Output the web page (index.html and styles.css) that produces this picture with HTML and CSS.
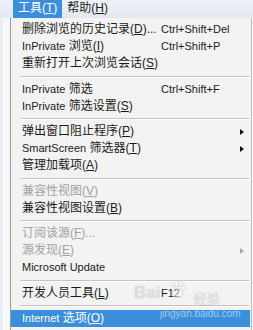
FILE: index.html
```html
<!DOCTYPE html>
<html lang="zh-CN">
<head>
<meta charset="utf-8">
<link rel="stylesheet" href="styles.css">
</head>
<body>
<div class="screen">
  <div class="menubar">
    <span class="mb-item active">工具(<u>T</u>)</span>
    <span class="mb-item">帮助(<u>H</u>)</span>
  </div>
  <div class="main">
    <div class="side"></div>
    <div class="menu">
      <div class="item"><span class="label">删除浏览的历史记录(<u>D</u>)...</span><span class="key">Ctrl+Shift+Del</span></div>
      <div class="item"><span class="label"><span class="en">InPrivate</span> 浏览(<u>I</u>)</span><span class="key">Ctrl+Shift+P</span></div>
      <div class="item"><span class="label">重新打开上次浏览会话(<u>S</u>)</span></div>
      <div class="sep tall"></div>
      <div class="item"><span class="label"><span class="en">InPrivate</span> 筛选</span><span class="key">Ctrl+Shift+F</span></div>
      <div class="item"><span class="label"><span class="en">InPrivate</span> 筛选设置(<u>S</u>)</span></div>
      <div class="sep"></div>
      <div class="item"><span class="label">弹出窗口阻止程序(<u>P</u>)</span><span class="key"></span><span class="arrow"></span></div>
      <div class="item"><span class="label"><span class="en">SmartScreen</span> 筛选器(<u>T</u>)</span><span class="key"></span><span class="arrow"></span></div>
      <div class="item"><span class="label">管理加载项(<u>A</u>)</span></div>
      <div class="sep tall"></div>
      <div class="item disabled"><span class="label">兼容性视图(<u>V</u>)</span></div>
      <div class="item"><span class="label">兼容性视图设置(<u>B</u>)</span></div>
      <div class="sep"></div>
      <div class="item disabled"><span class="label">订阅该源(<u>F</u>)...</span></div>
      <div class="item disabled"><span class="label">源发现(<u>E</u>)</span><span class="key"></span><span class="arrow"></span></div>
      <div class="item"><span class="label"><span class="en">Microsoft Update</span></span></div>
      <div class="sep tall"></div>
      <div class="item"><span class="label">开发人员工具(<u>L</u>)</span><span class="key">F12</span></div>
      <div class="sep"></div>
      <div class="item selected"><span class="label"><span class="en">Internet</span> 选项(<u>O</u>)</span></div>
    </div>
    <div class="rest"></div>
  </div>
  <div class="wm">
    <span class="wm-bai">Bai</span>
    <svg class="wm-paw" width="16" height="18" viewBox="0 0 16 18">
      <ellipse cx="3" cy="7" rx="2" ry="2.6"/>
      <ellipse cx="6.5" cy="3" rx="2" ry="2.6"/>
      <ellipse cx="10.5" cy="3" rx="2" ry="2.6"/>
      <ellipse cx="13.5" cy="7" rx="2" ry="2.6"/>
      <path d="M8 8 C4 8 2 13 4 15 C6 17 10 17 12 15 C14 13 12 8 8 8 Z"/>
    </svg>
    <span class="wm-jy">经验</span>
    <span class="wm-url">jingyan.baidu.com</span>
  </div>
</div>
</body>
</html>
```
FILE: styles.css
```css
html, body {
  margin: 0;
  padding: 0;
}
body {
  width: 253px;
  height: 330px;
  overflow: hidden;
  background: #f2f2f2;
  font-family: "Liberation Sans", "Noto Sans CJK SC", sans-serif;
  font-size: 12px;
  color: #1b1b1b;
}
.screen {
  position: relative;
  width: 253px;
  height: 330px;
  display: flex;
  flex-direction: column;
}
.menubar {
  height: 18px;
  display: flex;
  align-items: stretch;
  padding-left: 13px;
  gap: 0;
  background: linear-gradient(#eef2f7, #e2e8f0);
}
.mb-item {
  padding: 0 5px;
  line-height: 17px;
  font-size: 12px;
  color: #1e1e1e;
}
.mb-item.active {
  background: #3b8edb;
  color: #fff;
}
.main {
  flex: 1;
  display: flex;
  min-height: 0;
}
.side {
  width: 10px;
  background: linear-gradient(90deg, #e9edf1 0, #e9edf1 2px, #f7f8fa 3px);
  border-right: 1px solid #9a9a9a;
}
.menu {
  width: 240px;
  background: #f3f3f3;
  border-right: 1px solid #b9b9b9;
  padding-top: 3px;
  display: flex;
  flex-direction: column;
}
.rest {
  flex: 1;
  background: #fafafa;
}
.item {
  height: 17px;
  line-height: 17px;
  display: grid;
  grid-template-columns: 139px 1fr 10px;
  align-items: center;
  padding-left: 11px;
  margin-right: 1px;
  white-space: nowrap;
}
.label u, .mb-item u {
  text-decoration: underline;
  text-underline-offset: 1px;
}
.en {
  font-size: 11px;
}
.key {
  font-size: 11px;
}
.arrow {
  width: 0;
  height: 0;
  border-left: 4px solid #111;
  border-top: 3.5px solid transparent;
  border-bottom: 3.5px solid transparent;
}
.item.disabled {
  color: #a2a2a2;
}
.item.disabled .arrow {
  border-left-color: #a8a8a8;
}
.item.selected {
  background: #3b8edb;
  color: #fff;
}
.sep {
  height: 0;
  margin: 3px 2px 3px 9px;
  border-top: 1px solid #c4c4c4;
  border-bottom: 1px solid #ffffff;
}
.sep.tall {
  margin-top: 4px;
}
.wm {
  position: absolute;
  left: 134px;
  top: 281px;
  width: 100px;
  height: 40px;
  pointer-events: none;
}
.wm-bai {
  position: absolute;
  left: 0;
  top: 2px;
  font-size: 17px;
  font-weight: bold;
  color: rgba(255, 255, 255, 0.55);
  text-shadow: 0 0 1px rgba(120, 120, 120, 0.5);
}
.wm-paw {
  position: absolute;
  left: 36px;
  top: 0;
  fill: rgba(255, 255, 255, 0.5);
  stroke: rgba(140, 140, 140, 0.4);
  stroke-width: 0.6;
}
.wm-jy {
  position: absolute;
  left: 60px;
  top: 7px;
  font-size: 13px;
  color: rgba(255, 255, 255, 0.55);
  text-shadow: 0 0 1px rgba(120, 120, 120, 0.5);
}
.wm-url {
  position: absolute;
  left: 26px;
  top: 27px;
  font-size: 10px;
  color: rgba(255, 255, 255, 0.55);
}
```
